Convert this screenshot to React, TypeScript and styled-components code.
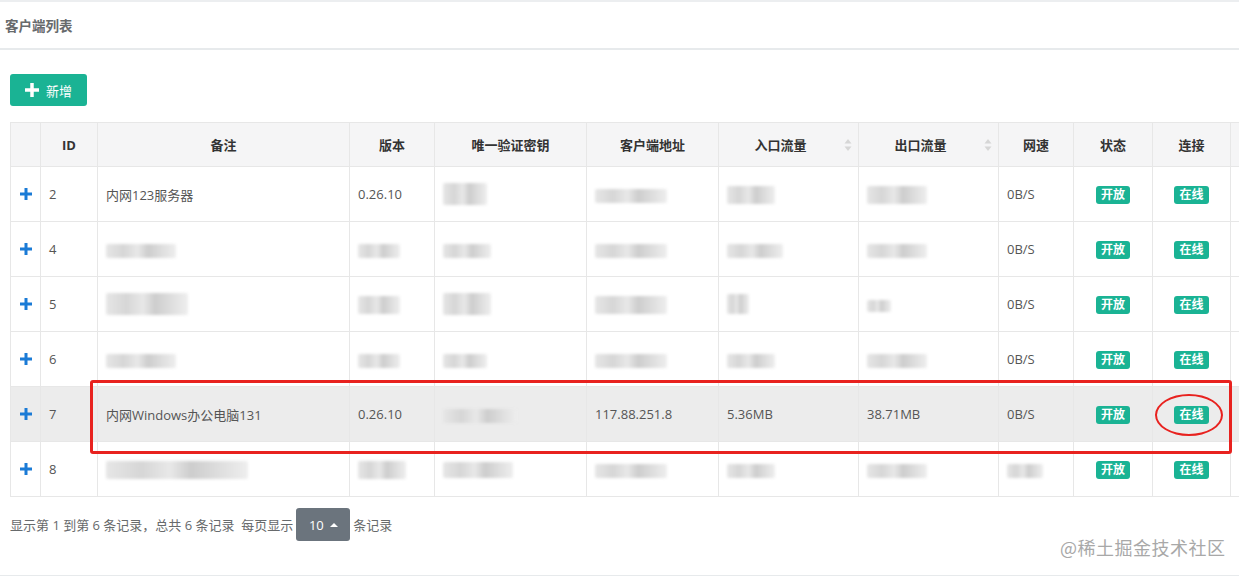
import React from "react";
import styled, { createGlobalStyle } from "styled-components";

const Global = createGlobalStyle`
  html, body { margin: 0; padding: 0; background: #fff; overflow: hidden; }
  body { font-family: "Open Sans", "Noto Sans CJK SC", sans-serif; color: #555; font-size: 13px; }
  * { box-sizing: border-box; }
`;

const Page = styled.div`
  position: relative;
  width: 1239px;
  height: 576px;
  border-top: 2px solid #eceef0;
  border-bottom: 1px solid #e7eaec;
  overflow: hidden;
`;

const TitleBar = styled.div`
  height: 48px;
  display: flex;
  align-items: center;
  padding: 0 5px;
  border-bottom: 2px solid #e7eaec;
  font-size: 13.5px;
  font-weight: 600;
  color: #676a6c;
`;

const Body = styled.div`
  padding: 24px 0 0 10px;
  display: flex;
  flex-direction: column;
`;

const AddButton = styled.button`
  width: 77px;
  height: 32px;
  border: none;
  border-radius: 3px;
  background: #1ab394;
  color: #fff;
  font-family: inherit;
  font-size: 13px;
  display: flex;
  align-items: center;
  justify-content: center;
  gap: 7px;
  padding: 0;
  margin-bottom: 16px;
  white-space: nowrap;
`;

const Table = styled.table`
  border-collapse: collapse;
  table-layout: fixed;
  width: 1300px;
`;

const Th = styled.th<{ w: number; sortable?: boolean }>`
  width: ${(p) => p.w}px;
  height: 44px;
  background: #f5f5f6;
  border: 1px solid #e7e7e7;
  font-weight: 700;
  color: #333;
  font-size: 13px;
  text-align: center;
  position: relative;
  padding: 0 ${(p) => (p.sortable ? 16 : 0)}px 0 0;
`;

const SortIcon = styled.span`
  position: absolute;
  right: 6px;
  top: 50%;
  transform: translateY(-50%);
  display: flex;
`;

const Tr = styled.tr<{ hl?: boolean }>`
  background: ${(p) => (p.hl ? "#ececec" : "#fff")};
`;

const Td = styled.td<{ center?: boolean }>`
  height: 55px;
  border: 1px solid #e7e7e7;
  padding: 0 8px;
  text-align: ${(p) => (p.center ? "center" : "left")};
  color: #555;
  font-size: 13px;
  white-space: nowrap;
  overflow: hidden;
`;

const Badge = styled.span`
  display: inline-block;
  background: #1ab394;
  color: #fff;
  font-size: 12px;
  font-weight: 700;
  line-height: 18px;
  padding: 0 5px;
  border-radius: 3px;
`;

const Blur = styled.span<{ w: number; h?: number }>`
  display: inline-block;
  vertical-align: middle;
  width: ${(p) => p.w}px;
  height: ${(p) => p.h ?? 14}px;
  border-radius: 2px;
  background: linear-gradient(90deg, #e6e6e6 0%, #d6d6d6 25%, #e8e8e8 45%, #cdcdcd 60%, #dedede 80%, #eeeeee 100%);
  filter: blur(1.8px);
`;

const Footer = styled.div`
  display: flex;
  align-items: center;
  gap: 3px;
  margin-top: 11px;
  color: #676a6c;
  font-size: 13px;
`;

const PageSize = styled.div`
  width: 54px;
  height: 33px;
  border-radius: 3px;
  background: #6b747d;
  color: #fff;
  display: flex;
  align-items: center;
  justify-content: center;
  gap: 6px;
  font-size: 13px;
`;

const Caret = styled.span`
  width: 0;
  height: 0;
  border-left: 4px solid transparent;
  border-right: 4px solid transparent;
  border-bottom: 4px solid #fff;
`;

const Watermark = styled.div`
  position: absolute;
  left: 1060px;
  top: 532px;
  font-size: 18px;
  color: #a8a8a8;
  font-family: "Noto Sans CJK SC", sans-serif;
  letter-spacing: 0.5px;
`;

const RedRect = styled.div`
  position: absolute;
  left: 90px;
  top: 378px;
  width: 1142px;
  height: 74px;
  border: 3px solid #e8221f;
  border-radius: 3px;
  pointer-events: none;
`;

const RedEllipse = styled.div`
  position: absolute;
  left: 1155px;
  top: 392px;
  width: 68px;
  height: 42px;
  border: 2.5px solid #e8221f;
  border-radius: 50%;
  pointer-events: none;
`;

const IconSvg = styled.svg<{ centered?: boolean }>`
  display: block;
  flex: none;
  margin: ${(p) => (p.centered ? "0 auto" : "0")};
`;

const Plus = ({ size = 12, color = "#1a7bd6", thick = 3, centered = true }: { size?: number; color?: string; thick?: number; centered?: boolean }) => (
  <IconSvg width={size} height={size} viewBox={`0 0 ${size} ${size}`} centered={centered}>
    <rect x={(size - thick) / 2} y={0} width={thick} height={size} fill={color} />
    <rect x={0} y={(size - thick) / 2} width={size} height={thick} fill={color} />
  </IconSvg>
);

const Sort = () => (
  <SortIcon>
    <svg width="8" height="14" viewBox="0 0 8 14">
      <path d="M4 1 L7.5 5.5 L0.5 5.5 Z" fill="#d6d6d6" />
      <path d="M4 13 L7.5 8.5 L0.5 8.5 Z" fill="#d6d6d6" />
    </svg>
  </SortIcon>
);

type Cell = string | { b: number; h?: number };
type Row = { id: number; cells: Cell[]; speed: Cell; hl?: boolean };

const rows: Row[] = [
  { id: 2, cells: ["内网123服务器", "0.26.10", { b: 44, h: 22 }, { b: 72 }, { b: 48, h: 18 }, { b: 60, h: 18 }], speed: "0B/S" },
  { id: 4, cells: [{ b: 70 }, { b: 42 }, { b: 48 }, { b: 72 }, { b: 56 }, { b: 60 }], speed: "0B/S" },
  { id: 5, cells: [{ b: 82, h: 22 }, { b: 42, h: 18 }, { b: 48, h: 22 }, { b: 72, h: 18 }, { b: 22, h: 20 }, { b: 24, h: 12 }], speed: "0B/S" },
  { id: 6, cells: [{ b: 70 }, { b: 42 }, { b: 44 }, { b: 72 }, { b: 48 }, { b: 60 }], speed: "0B/S" },
  { id: 7, cells: ["内网Windows办公电脑131", "0.26.10", { b: 74 }, "117.88.251.8", "5.36MB", "38.71MB"], speed: "0B/S", hl: true },
  { id: 8, cells: [{ b: 142, h: 18 }, { b: 48, h: 18 }, { b: 70, h: 16 }, { b: 72 }, { b: 48 }, { b: 60 }], speed: { b: 36 } },
];

const render = (c: Cell) => (typeof c === "string" ? c : <Blur w={c.b} h={c.h} />);

const heads: { t: string; w: number; sort?: boolean }[] = [
  { t: "", w: 30 },
  { t: "ID", w: 57 },
  { t: "备注", w: 252 },
  { t: "版本", w: 85 },
  { t: "唯一验证密钥", w: 152 },
  { t: "客户端地址", w: 132 },
  { t: "入口流量", w: 140, sort: true },
  { t: "出口流量", w: 140, sort: true },
  { t: "网速", w: 75 },
  { t: "状态", w: 79 },
  { t: "连接", w: 78 },
  { t: "", w: 80 },
];

export default function App() {
  return (
    <Page>
      <Global />
      <TitleBar>客户端列表</TitleBar>
      <Body>
        <AddButton>
          <Plus size={14} color="#fff" thick={3.5} centered={false} />
          <span>新增</span>
        </AddButton>
        <Table>
          <thead>
            <tr>
              {heads.map((h, i) => (
                <Th key={i} w={h.w} sortable={h.sort}>
                  {h.t}
                  {h.sort && <Sort />}
                </Th>
              ))}
            </tr>
          </thead>
          <tbody>
            {rows.map((r) => (
              <Tr key={r.id} hl={r.hl}>
                <Td center>
                  <Plus />
                </Td>
                <Td>{r.id}</Td>
                {r.cells.map((c, i) => (
                  <Td key={i}>{render(c)}</Td>
                ))}
                <Td>{render(r.speed)}</Td>
                <Td center>
                  <Badge>开放</Badge>
                </Td>
                <Td center>
                  <Badge>在线</Badge>
                </Td>
                <Td />
              </Tr>
            ))}
          </tbody>
        </Table>
        <Footer>
          <span>显示第 1 到第 6 条记录，总共 6 条记录&nbsp;&nbsp;每页显示</span>
          <PageSize>
            <span>10</span>
            <Caret />
          </PageSize>
          <span>条记录</span>
        </Footer>
      </Body>
      <RedRect />
      <RedEllipse />
      <Watermark>@稀土掘金技术社区</Watermark>
    </Page>
  );
}
